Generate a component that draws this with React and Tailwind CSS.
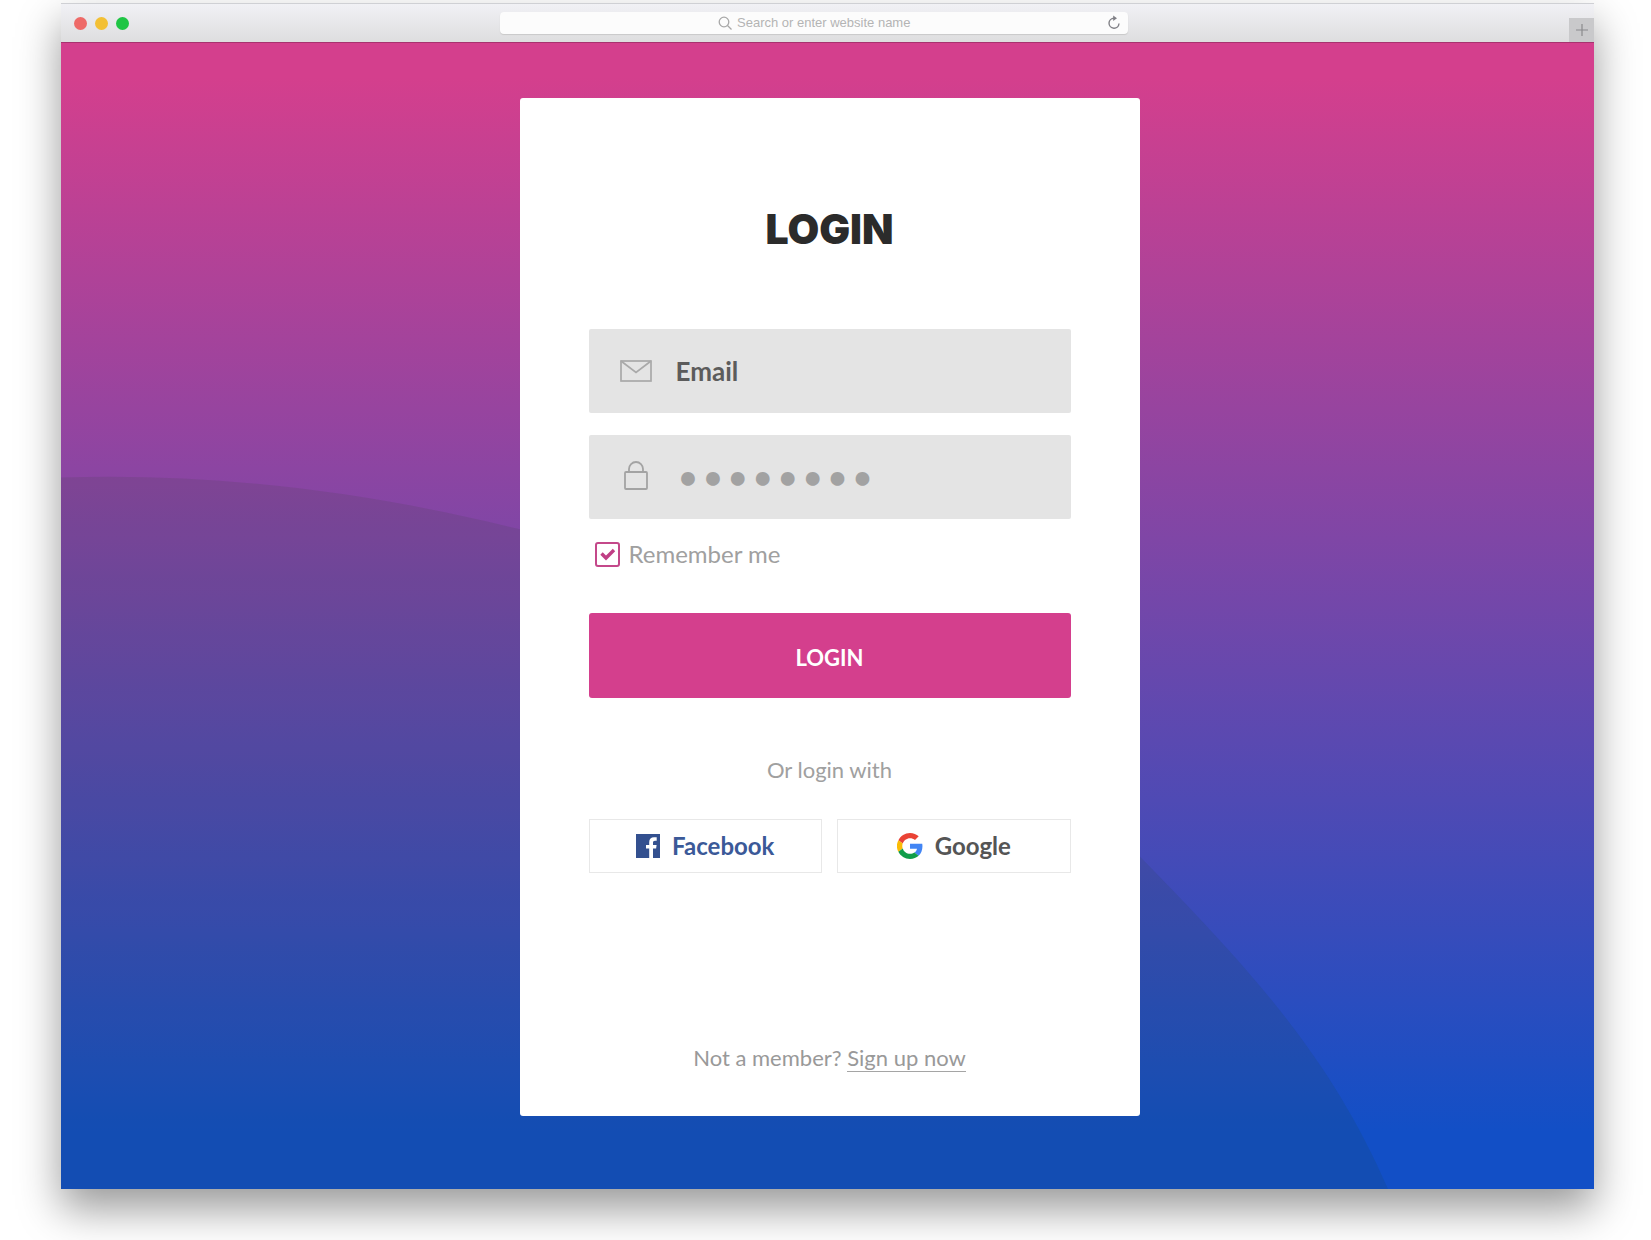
import React from "react";

function BrowserBar() {
  return (
    <header className="grid h-[39px] grid-cols-[439fr_628px_466fr] items-center border-t border-[#cfd0d4] bg-linear-to-b from-[#f1f1f5] to-[#dededf]">
      <div className="flex gap-2 pl-[13px]">
        <span className="size-[13px] rounded-full bg-[#ee6a68]" />
        <span className="size-[13px] rounded-full bg-[#f3c034]" />
        <span className="size-[13px] rounded-full bg-[#1fc544]" />
      </div>
      <label className="flex h-[22px] items-center justify-center rounded-sm bg-[#fcfcfc] pl-[217px] shadow-[0_1px_1px_#c9c9c9]">
        <svg className="mr-1 size-4 shrink-0" viewBox="0 0 16 16" fill="none" stroke="#a8a8a8" strokeWidth="1.3">
          <circle cx="7" cy="7" r="4.8" />
          <path d="M10.5 10.5 14.5 14.5" />
        </svg>
        <input
          type="text"
          aria-label="Address"
          placeholder="Search or enter website name"
          className="min-w-0 flex-1 bg-transparent font-['Liberation_Sans',sans-serif] text-[13px] outline-none placeholder:text-[#b4b4b4]"
        />
        <button type="button" aria-label="Reload" className="mr-[6px]">
          <svg className="size-4" viewBox="0 0 16 16" fill="none" stroke="#808086" strokeWidth="1.4">
            <path d="M8 3.2A5 5 0 1 0 13 8.5" />
            <path d="M7.2 .5 11 3.3 7.2 6Z" fill="#808086" stroke="none" />
          </svg>
        </button>
      </label>
      <button type="button" aria-label="New tab" className="flex h-6 w-[25px] items-center justify-center self-end justify-self-end bg-[#c9c9cb]">
        <svg className="size-3" viewBox="0 0 12 12" stroke="#8a8a8d" strokeWidth="1.2">
          <path d="M6 0V12M0 6H12" />
        </svg>
      </button>
    </header>
  );
}

function MailIcon() {
  return (
    <svg className="h-[22px] w-8" viewBox="0 0 32 22" fill="none" stroke="#a9a9a9" strokeWidth="1.7">
      <rect x="1" y="1" width="30" height="20" />
      <path d="M1 1 16 12.5 31 1" />
    </svg>
  );
}

function LockIcon() {
  return (
    <svg className="h-8 w-6" viewBox="0 0 24 32" fill="none" stroke="#a3a3a3" strokeWidth="1.8">
      <rect x="1" y="11" width="22" height="17" rx="1" />
      <path d="M5 11V8a7 7 0 0 1 14 0v3" />
    </svg>
  );
}

function FacebookIcon() {
  return (
    <svg className="size-6" viewBox="0 0 24 24">
      <rect width="24" height="24" fill="#33508f" />
      <path d="M13.2 24V14.6H10V11h3.2V8.3C13.2 5 15.1 3.3 18 3.3h2.7v3.4H19c-1.5 0-2 .7-2 2V11h3.6l-.5 3.6H17V24Z" fill="#fff" />
    </svg>
  );
}

function GoogleIcon() {
  return (
    <svg className="size-[26px]" viewBox="0 0 48 48">
      <path fill="#ea4335" d="M24 9.5c3.5 0 6.7 1.2 9.2 3.6l6.9-6.9C35.9 2.4 30.5 0 24 0 14.6 0 6.5 5.4 2.6 13.2l8 6.2C12.4 13.7 17.7 9.5 24 9.5Z" />
      <path fill="#4285f4" d="M47 24.5c0-1.6-.2-3.1-.4-4.5H24v9h12.9c-.6 3-2.3 5.5-4.8 7.2l7.7 6C44.4 38 47 31.8 47 24.5Z" />
      <path fill="#fbbc05" d="M10.5 28.6a14.5 14.5 0 0 1 0-9.2l-8-6.2a24 24 0 0 0 0 21.6l8-6.2Z" />
      <path fill="#109d4a" d="M24 48c6.5 0 11.9-2.1 15.9-5.8l-7.7-6c-2.2 1.5-4.9 2.3-8.2 2.3-6.3 0-11.6-4.2-13.5-9.9l-8 6.2C6.5 42.6 14.6 48 24 48Z" />
    </svg>
  );
}

function Field({ id, label, icon, className, ...props }) {
  return (
    <div className="flex h-[84px] items-center rounded-xs bg-[#e4e4e4]">
      <label htmlFor={id} aria-label={label} className="flex w-[87px] shrink-0 justify-center pl-2">
        {icon}
      </label>
      <input id={id} className={"h-full min-w-0 flex-1 bg-transparent outline-none " + className} {...props} />
    </div>
  );
}

function LoginCard() {
  return (
    <form
      className="flex w-full max-w-[620px] flex-col rounded-[3px] bg-white px-[69px] pt-[107px] pb-11"
      onSubmit={(e) => e.preventDefault()}
    >
      <h1 className="text-center font-['Inter',sans-serif] text-[41px] leading-12 font-black text-[#2b2b2b]">LOGIN</h1>

      <div className="mt-[76px] flex flex-col gap-[22px]">
        <Field
          id="email"
          label="Email"
          icon={<MailIcon />}
          type="email"
          placeholder="Email"
          className="text-[26px] font-bold placeholder:text-[#5c5c5c]"
        />
        <Field
          id="password"
          label="Password"
          icon={<LockIcon />}
          type="password"
          defaultValue="password"
          className="pt-1 font-['DejaVu_Sans',sans-serif] text-[39px] font-bold text-[#a2a2a2]"
        />
      </div>

      <div className="mt-[21px] flex items-center gap-[9px] pl-[6px]">
        <span className="relative size-[25px]">
          <input
            id="remember"
            type="checkbox"
            defaultChecked
            className="peer block size-[25px] appearance-none rounded-[3px] border-2 border-[#c4488a] bg-white"
          />
          <svg
            className="pointer-events-none absolute inset-0 hidden size-[25px] peer-checked:block"
            viewBox="0 0 25 25"
            fill="none"
            stroke="#c03f85"
            strokeWidth="3.4"
          >
            <path d="M6.5 11.5 11 16 19 8" />
          </svg>
        </span>
        <label htmlFor="remember" className="text-2xl leading-7 text-[#a0a0a0]">
          Remember me
        </label>
      </div>

      <button type="submit" className="mt-[45px] h-[85px] rounded-[3px] bg-[#d43f8d] pt-1 text-[22px] font-bold text-white">
        LOGIN
      </button>

      <p className="mt-[58px] text-center text-[22px] leading-7 text-[#a0a0a0]">Or login with</p>

      <div className="mt-[35px] grid grid-cols-2 gap-[15px] text-2xl font-bold">
        <button type="button" className="flex h-[54px] items-center justify-center gap-3 border border-[#e8e8e8] text-[#3b5998]">
          <FacebookIcon />
          Facebook
        </button>
        <button type="button" className="flex h-[54px] items-center justify-center gap-3 border border-[#e8e8e8] text-[#555555]">
          <GoogleIcon />
          Google
        </button>
      </div>

      <p className="mt-[171px] text-center text-[22px] leading-7 text-[#999999]">
        Not a member?{" "}
        <a href="#signup" className="inline-block border-b border-[#a5a5a5] leading-[26px]">
          Sign up now
        </a>
      </p>
    </form>
  );
}

export default function App() {
  return (
    <div className="min-h-screen overflow-hidden bg-white pt-[3px] pr-[57px] pb-[51px] pl-[61px] font-['Lato',sans-serif]">
      <div className="shadow-[0_20px_40px_rgba(0,0,0,0.4)]">
        <BrowserBar />
        <main className="relative flex justify-center border-t border-[#a8326f] bg-[linear-gradient(to_bottom,#d43f8d_3%,#124fc6_95%)] pt-[55px] pb-[73px] pl-1">
          <svg className="absolute inset-0 size-full" viewBox="0 0 1533 1147" preserveAspectRatio="none" aria-hidden="true">
            <path
              d="M0 435C160 430 310 450 460 487C730 550 950 675 1100 836C1196 935 1272 1020 1327 1147H0Z"
              fill="#204010"
              fillOpacity="0.1"
            />
          </svg>
          <div className="relative flex w-full justify-center">
            <LoginCard />
          </div>
        </main>
      </div>
    </div>
  );
}
